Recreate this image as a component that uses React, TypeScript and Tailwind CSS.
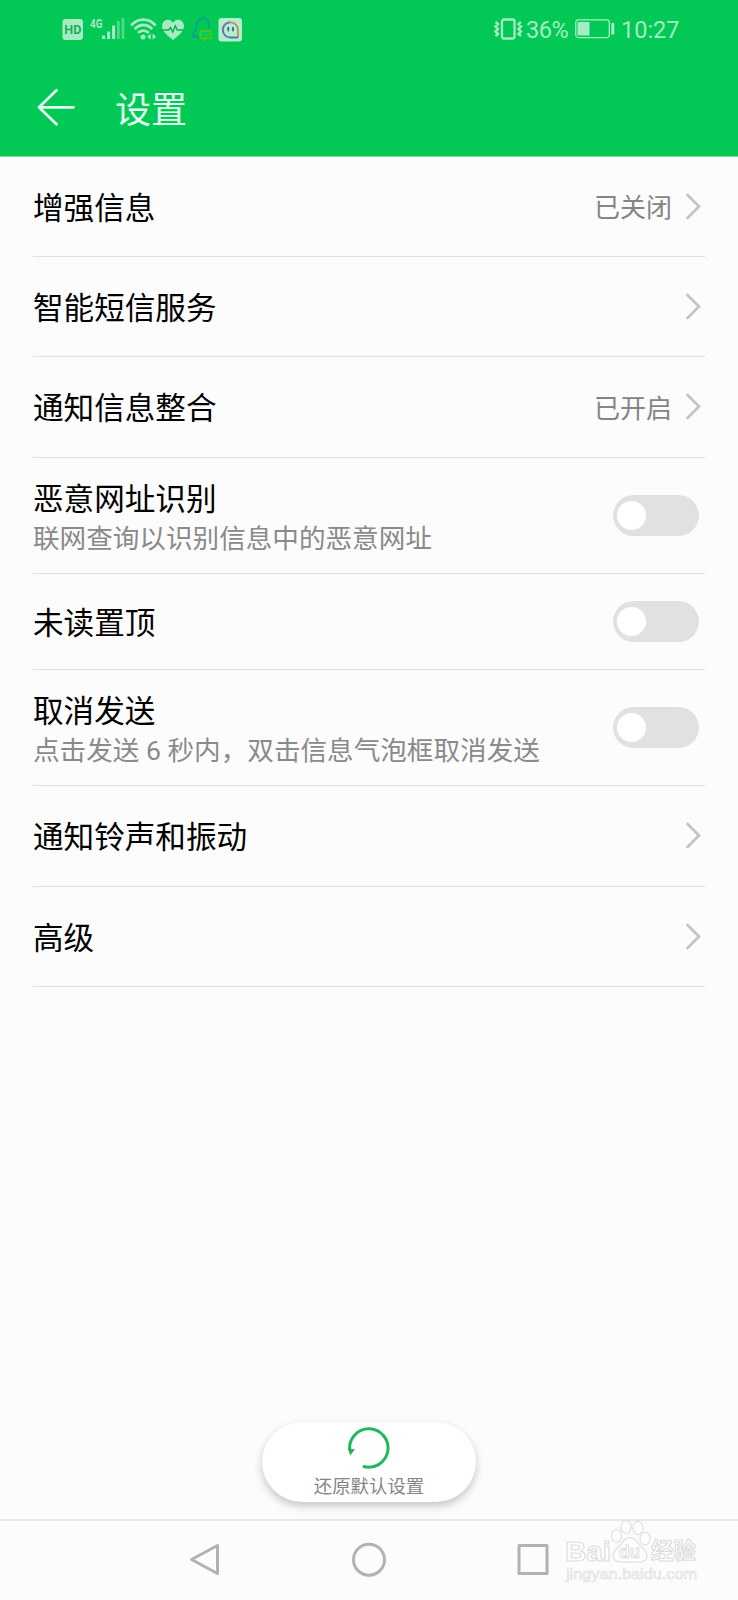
import type { ReactNode } from "react";

interface Setting {
  title: string;
  subtitle?: string;
  value?: string;
  toggle?: boolean;
  height: string;
}

const SETTINGS: Setting[] = [
  { title: "增强信息", value: "已关闭", height: "h-[100px]" },
  { title: "智能短信服务", height: "h-[100px]" },
  { title: "通知信息整合", value: "已开启", height: "h-[101px]" },
  { title: "恶意网址识别", subtitle: "联网查询以识别信息中的恶意网址", toggle: true, height: "h-[116px]" },
  { title: "未读置顶", toggle: true, height: "h-[96px]" },
  { title: "取消发送", subtitle: "点击发送 6 秒内，双击信息气泡框取消发送", toggle: true, height: "h-[116px]" },
  { title: "通知铃声和振动", height: "h-[101px]" },
  { title: "高级", height: "h-[100px]" },
];

function StatusBar() {
  return (
    <div className="flex h-[58px] items-center justify-between pl-[62px] pr-[60px] font-['Roboto',sans-serif] text-[#a6ecc3]">
      <svg width="182" height="30" viewBox="62 14 182 30" fill="none">
        <rect x="62.5" y="19" width="20.5" height="21" rx="3" fill="currentColor" />
        <text x="72.8" y="34.3" textAnchor="middle" fontSize="13.5" fontWeight="700" textLength="17" lengthAdjust="spacingAndGlyphs" fill="#1dae5a">HD</text>
        <text x="90" y="28" fontSize="13" fontWeight="700" textLength="12.5" lengthAdjust="spacingAndGlyphs" fill="currentColor">4G</text>
        {/* signal */}
        <path d="M103.6 35.5V39M108.6 31.5V39M113.6 25.5V39" stroke="currentColor" strokeWidth="3" />
        <path d="M118.4 21V39M123 18V39" stroke="#4ddb84" strokeWidth="2.8" />
        {/* wifi */}
        <g stroke="currentColor" strokeWidth="2.8">
          <path d="M131.2 25.5C138 17.6 148.5 17.6 155.6 25.5" />
          <path d="M134.6 29.2C139.6 23.6 147.4 23.6 152.2 29.2" />
          <path d="M138 32.9C141 29.8 145.6 29.8 148.8 32.9" />
        </g>
        <circle cx="143" cy="37" r="2.5" fill="currentColor" />
        <path d="M150.8 33.6v6.2l-3.6-3.1zM152.6 33.6v6.2l3.6-3.1z" fill="currentColor" />
        {/* health */}
        <path d="M173 40C168 35.6 162 31.8 162 26.2C162 19.4 169.8 17.4 173 22.6C176.2 17.4 184 19.4 184 26.2C184 31.8 178 35.6 173 40Z" fill="currentColor" />
        <path d="M162 30h6.5l2-2.5 2.2 4.5 2.6-6 2 4h6.7" stroke="#09b24e" strokeWidth="1.4" />
        {/* chat assistant */}
        <path d="M196 30C192 34 192 37.8 194 37L196 35.2C196.8 37 197.8 38.5 199.5 39.2M196 30C195 14.6 211 14.6 209 28" stroke="#08a095" strokeWidth="1.7" />
        <path d="M200.5 31h10.3v7h-5l-2 2v-2h-3.3z" stroke="#55c816" strokeWidth="1.6" />
        <path d="M202.8 34.6h1.4M205.2 34.6h1.4M207.6 34.6h1.4" stroke="#55c816" strokeWidth="1.4" />
        {/* message app */}
        <rect x="218.5" y="18" width="23.5" height="23.5" rx="3" fill="#b5eecd" />
        <path d="M222.8 30a7.6 7.6 0 0 1 7.6-7.8" stroke="#7b6dac" strokeWidth="1.9" />
        <path d="M230.4 22.2A7.7 7.7 0 0 1 238 30v4" stroke="#b69a68" strokeWidth="1.9" />
        <path d="M238 33.5v4" stroke="#d58a62" strokeWidth="1.9" />
        <path d="M222.8 30a7.6 7.6 0 0 0 7.6 7.5H238" stroke="#5574b6" strokeWidth="1.9" />
        <path d="M228.3 27.6v3M233 27.6v3" stroke="#426aa8" strokeWidth="1.9" strokeLinecap="round" />
      </svg>
      <div className="flex items-center text-[23.5px] leading-none">
        <svg width="30" height="24" viewBox="0 0 30 24" fill="none" stroke="currentColor">
          <rect x="8" y="2.5" width="12.5" height="19" rx="2" strokeWidth="2.3" />
          <path d="M1.5 5l2.5 2-2.5 2.5 2.5 2.5-2.5 2.5 2.5 2.5-2.5 2M27 5l-2.5 2 2.5 2.5-2.5 2.5 2.5 2.5-2.5 2.5 2.5 2" strokeWidth="2.4" />
        </svg>
        <span className="ml-0.5 w-[43px] whitespace-nowrap pt-[3px] tracking-[-0.5px]">36%</span>
        <svg className="ml-1.5" width="40" height="20" viewBox="0 0 40 20" fill="none">
          <rect x=".8" y=".8" width="33.5" height="17.8" rx="2.5" stroke="currentColor" strokeWidth="1.3" />
          <rect x="2.5" y="3" width="12" height="13.5" fill="currentColor" />
          <path d="M37.8 4v11.5" stroke="currentColor" strokeWidth="3" />
        </svg>
        <span className="ml-1.5 w-[57px] whitespace-nowrap pt-[3px]">10:27</span>
      </div>
    </div>
  );
}

function Chevron() {
  return (
    <svg className="mr-[3px] ml-[13px]" width="17" height="28" viewBox="0 0 17 28" fill="none">
      <path d="M2.5 2L14 13.5L2.5 25" stroke="#c4c4c4" strokeWidth="2.7" strokeLinecap="round" />
    </svg>
  );
}

function Toggle() {
  return (
    <div className="mr-1.5 flex h-[41px] w-[86px] shrink-0 items-center rounded-full bg-[#e1e1e1] pl-1">
      <div className="h-[29px] w-[29px] rounded-full bg-white" />
    </div>
  );
}

function SettingRow({ setting }: { setting: Setting }) {
  return (
    <div className={`flex items-center justify-between border-b border-[#e0e0e0] ${setting.height}`}>
      <div className="whitespace-nowrap">
        <div className={`text-[30.6px] text-black ${setting.subtitle ? "pt-[7px] leading-[38px]" : "pt-[4px] leading-[40px]"}`}>
          {setting.title}
        </div>
        {setting.subtitle && <div className="text-[26.6px] leading-[39px] text-[#8a8a8a]">{setting.subtitle}</div>}
      </div>
      {setting.toggle ? (
        <Toggle />
      ) : (
        <div className="flex items-center text-[26px] text-[#858585]">
          {setting.value && <span className="pt-[3px] leading-9">{setting.value}</span>}
          <Chevron />
        </div>
      )}
    </div>
  );
}

function NavIcon({ children }: { children: ReactNode }) {
  return (
    <svg width="40" height="40" viewBox="0 0 40 40" fill="none" stroke="#b2b2b2" strokeWidth="3" strokeLinejoin="round">
      {children}
    </svg>
  );
}

function Watermark() {
  return (
    <svg className="absolute right-[36px] bottom-[10px]" width="140" height="76" viewBox="562 1514 140 76" fill="#fefefe" stroke="#dedede" strokeWidth="1.1">
      <g fontFamily="'Liberation Sans', sans-serif" fontWeight="700">
        <text x="565" y="1561" fontSize="28" textLength="46" lengthAdjust="spacingAndGlyphs">Bai</text>
        <ellipse cx="616.5" cy="1536" rx="5" ry="6.5" />
        <ellipse cx="626" cy="1527" rx="5" ry="6.5" />
        <ellipse cx="638" cy="1528" rx="5" ry="6.5" />
        <ellipse cx="645" cy="1538.5" rx="5" ry="6.5" />
        <path d="M630 1537.5c5 0 7 4 10 8c4 4 7 6 7 10c0 7-7 7-17 6.5c-10 .5-17 0-17-6.5c0-4 4-7 7-10c3-4 5-8 10-8z" />
        <text x="619" y="1558" fontSize="19" textLength="21" lengthAdjust="spacingAndGlyphs">du</text>
        <text x="566" y="1578.5" fontSize="14" fontWeight="400" strokeWidth=".6" textLength="131" lengthAdjust="spacingAndGlyphs">jingyan.baidu.com</text>
      </g>
      <text x="651" y="1559" fontSize="22.5" fontWeight="700" fontFamily="'Noto Sans CJK SC', sans-serif">经验</text>
    </svg>
  );
}

export default function App() {
  return (
    <div lang="zh-CN" className="relative flex h-[1600px] w-[738px] flex-col overflow-hidden bg-[#fcfcfc] font-['Roboto','Noto_Sans_CJK_SC',sans-serif]">
      <header className="h-[157px] shrink-0 border-b border-[#7de3a5] bg-[#02c955]">
        <StatusBar />
        <div className="flex h-[98px] items-center pl-[35px] text-[#e3fff0]">
          <svg width="40" height="40" viewBox="0 0 40 40" fill="none" stroke="currentColor" strokeWidth="2.8" strokeLinecap="round" strokeLinejoin="round">
            <path d="M21.5 3.3L4 20.3L21.5 37.3M4 20.3H38.5" />
          </svg>
          <h1 className="ml-[40px] pt-2 text-[36px] leading-[50px]">设置</h1>
        </div>
      </header>

      <main className="flex-1 pr-[33px] pl-[33px]">
        {SETTINGS.map((setting) => (
          <SettingRow key={setting.title} setting={setting} />
        ))}
      </main>

      <button className="mx-auto mb-[17px] flex h-[80px] w-[214px] shrink-0 flex-col items-center rounded-full bg-white pt-1 text-[#858585] shadow-[0_4px_9px_rgba(0,0,0,0.22)]">
        <svg width="44" height="44" viewBox="0 0 44 44" fill="none">
          <path d="M2.8 24.5A19.2 19.2 0 1 1 16 40.3" stroke="#1fb858" strokeWidth="3" />
          <path d="M1 22.5l7 .8-4.8 6.2z" fill="#1fb858" />
        </svg>
        <span className="pt-[2px] text-[18.4px] leading-[30px]">还原默认设置</span>
      </button>

      <nav className="flex h-[81px] shrink-0 items-center justify-center gap-[124px] border-t-2 border-[#e6e6e6]">
        <NavIcon>
          <path d="M32.5 4.5V32.5L6.5 18.5Z" />
        </NavIcon>
        <NavIcon>
          <circle cx="20" cy="18.7" r="15.5" />
        </NavIcon>
        <NavIcon>
          <rect x="6" y="4.5" width="28" height="28" />
        </NavIcon>
      </nav>
      <Watermark />
    </div>
  );
}
